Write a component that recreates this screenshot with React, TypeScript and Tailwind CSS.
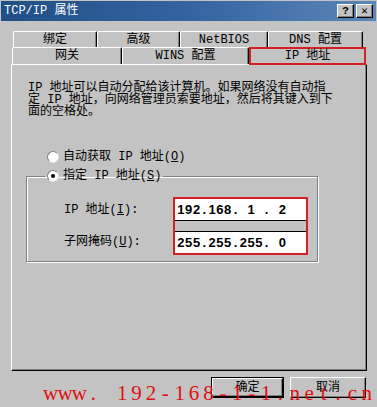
import React from 'react';

const ui = "font-['Liberation_Mono','Noto_Sans_CJK_SC',monospace] text-[12px] leading-[12px] text-black";
const raised = 'border-t border-l border-t-white border-l-white border-r border-b border-r-black border-b-black shadow-[inset_-1px_-1px_0_#808080]';

const Tab = ({ label, w, h, className = '' }: { label: string; w: string; h: string; className?: string }) => (
  <div className={`${w} ${h} ${className} flex items-center justify-center border-t border-l border-white border-r border-r-black rounded-t-[2px] shadow-[inset_-1px_0_0_#808080] whitespace-pre`}>
    {label}
  </div>
);

const Radio = ({ checked }: { checked?: boolean }) => (
  <div className="w-[12px] h-[12px] rounded-full bg-white border border-t-[#808080] border-l-[#808080] border-r-[#e0e0e0] border-b-[#e0e0e0] flex items-center justify-center">
    {checked && <div className="w-[4px] h-[4px] rounded-full bg-black" />}
  </div>
);

const Ip = ({ text }: { text: string }) => (
  <div className="flex items-center h-full pl-[2px] font-['Liberation_Sans',sans-serif] font-bold text-[13px]">
    {text.split('').map((c, i) => (
      <span key={i} className="inline-block w-[7.8px] text-center">{c}</span>
    ))}
  </div>
);

const mark = 'www. 192-168-1-1.net.cn';

export default function App() {
  return (
    <div className={`${ui} relative w-[377px] h-[407px] overflow-hidden bg-[#c3c3c3]`}>
      {/* title bar */}
      <div className="mx-[1px] mt-[1px] h-[20px] flex items-center justify-between pl-[3px] pr-[3px] bg-gradient-to-r from-[#1f4f86] via-[#3563a0] to-[#5a86b8]">
        <span className="text-white">TCP/IP 属性</span>
        <div className="flex gap-[2px]">
          <div className={`${raised} w-[17px] h-[14px] bg-[#c3c3c3] flex items-center justify-center font-bold text-[11px]`}>?</div>
          <div className={`${raised} w-[17px] h-[14px] bg-[#c3c3c3] flex items-center justify-center font-bold text-[11px]`}>✕</div>
        </div>
      </div>

      {/* tabs */}
      <div className="mt-[10px] ml-[13px] flex">
        <Tab label="绑定" w="w-[84px]" h="h-[16px]" />
        <Tab label="高级" w="w-[83px]" h="h-[16px]" />
        <Tab label="NetBIOS" w="w-[88px]" h="h-[16px]" />
        <Tab label="DNS 配置" w="w-[95px]" h="h-[16px]" />
      </div>
      <div className="ml-[12px] flex">
        <Tab label="网关" w="w-[110px]" h="h-[17px]" />
        <Tab label="WINS 配置" w="w-[127px]" h="h-[17px]" />
        <div className="w-[117px] h-[18px] border-2 border-[#d42020] flex items-center justify-center whitespace-pre">IP 地址</div>
      </div>

      {/* panel */}
      <div className="ml-[11px] -mt-[1px] w-[356px] h-[307px] border-t border-l border-white border-r border-b border-r-black border-b-black shadow-[inset_-1px_-1px_0_#808080]">
        <div className="pl-[16px] pt-[17px]">
          IP 地址可以自动分配给该计算机。如果网络没有自动指<br />
          定 IP 地址，向网络管理员索要地址，然后将其键入到下<br />
          面的空格处。
        </div>

        <div className="mt-[32px] ml-[35px] flex items-center gap-[4px] h-[14px]">
          <Radio />
          <span className="whitespace-pre">自动获取 IP 地址(<u>O</u>)</span>
        </div>

        <fieldset className="mt-[5px] ml-[14px] w-[292px] h-[93px] border border-[#808080] shadow-[1px_1px_0_#fff,inset_1px_1px_0_#fff]">
          <legend className="ml-[18px] px-[2px] flex items-center gap-[4px] h-[14px]">
            <Radio checked />
            <span className="whitespace-pre">指定 IP 地址(<u>S</u>)</span>
          </legend>
          <div className="mt-[14px] flex">
            <div className="w-[146px] pl-[37px] flex flex-col pt-[2px]">
              <div className="h-[22px] flex items-center whitespace-pre">IP 地址(<u>I</u>):</div>
              <div className="h-[10px]" />
              <div className="h-[22px] flex items-center whitespace-pre">子网掩码(<u>U</u>):</div>
            </div>
            <div className="w-[135px] border-2 border-[#d42020] flex flex-col">
              <div className="h-[22px] bg-white border-b border-black"><Ip text="192.168. 1 . 2" /></div>
              <div className="h-[10px]" />
              <div className="h-[22px] bg-white border-t border-black"><Ip text="255.255.255. 0" /></div>
            </div>
          </div>
        </fieldset>
      </div>

      {/* buttons */}
      <div className="mt-[6px] pr-[11px] flex justify-end gap-[6px]">
        <div className="w-[73px] h-[21px] border border-black">
          <div className={`${raised} w-full h-full flex items-center justify-center`}>确定</div>
        </div>
        <div className={`${raised} w-[76px] h-[21px] flex items-center justify-center`}>取消</div>
      </div>

      {/* watermark */}
      <div className="absolute left-[43px] top-[381px] flex font-['Liberation_Serif',serif] text-[21px] leading-[24px] text-[#e01010]">
        {mark.split('').map((c, i) => (
          <span key={i} className="inline-block w-[14.4px] text-center">{c === ' ' ? '\u00a0' : c}</span>
        ))}
      </div>
    </div>
  );
}
